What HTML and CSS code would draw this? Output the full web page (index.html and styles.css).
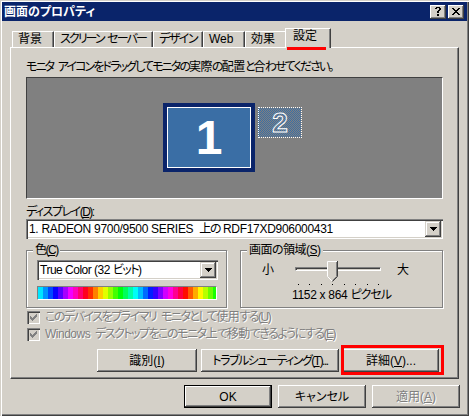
FILE: index.html
```html
<!DOCTYPE html>
<html lang="ja">
<head>
<meta charset="utf-8">
<title>画面のプロパティ</title>
<link rel="stylesheet" href="styles.css">
</head>
<body>
<div class="window">
  <div class="titlebar">
    <span class="title">画面のプロパティ</span>
    <div class="tb-btns">
      <span class="tb-btn"><svg width="6" height="9" viewBox="0 0 6 9" shape-rendering="crispEdges"><path fill="#000" d="M1 0h4v1h-4z M0 1h2v1h-2z M4 1h2v1h-2z M4 2h2v1h-2z M3 3h2v1h-2z M2 4h2v1h-2z M2 5h2v1h-2z M2 7h2v1h-2z M2 8h2v1h-2z"/></svg></span>
      <span class="tb-btn"><svg width="8" height="7" viewBox="0 0 8 7" shape-rendering="crispEdges"><path fill="#000" d="M0 0h2v1h-2z M6 0h2v1h-2z M1 1h2v1h-2z M5 1h2v1h-2z M2 2h4v1h-4z M3 3h2v1h-2z M2 4h4v1h-4z M1 5h2v1h-2z M5 5h2v1h-2z M0 6h2v1h-2z M6 6h2v1h-2z"/></svg></span>
    </div>
  </div>

  <div class="tabs">
    <div class="tab t-bg">背景</div>
    <div class="tab t-ss">スクリーン セーバー</div>
    <div class="tab t-ds">デザイン</div>
    <div class="tab t-web">Web</div>
    <div class="tab t-fx">効果</div>
    <div class="tab active">設定<span class="mark-tab"></span></div>
  </div>

  <div class="panel">
    <p class="hint">モニタ アイコンをドラッグしてモニタの<span class="k">実際</span>の<span class="k">配置</span>と<span class="k">合</span>わせてください。</p>
    <div class="monitors">
      <div class="mon mon1">1</div>
      <div class="mon mon2">2</div>
    </div>

    <div class="label">ディスプレイ(<u>D</u>):</div>
    <div class="combo combo-display">
      <span class="combo-text">1. RADEON 9700/9500 SERIES&nbsp; <span class="ja">上の</span> RDF17XD906000431</span>
      <span class="combo-btn"><svg width="7" height="4" viewBox="0 0 7 4" shape-rendering="crispEdges"><path fill="#000" d="M0 0h7v1h-7z M1 1h5v1h-5z M2 2h3v1h-3z M3 3h1v1h-1z"/></svg></span>
    </div>

    <div class="groups">
      <div class="group group-color">
        <span class="legend">色(<u>C</u>)</span>
        <div class="combo combo-color">
          <span class="combo-text">True Color (32 <span class="ja">ビット</span>)</span>
          <span class="combo-btn"><svg width="7" height="4" viewBox="0 0 7 4" shape-rendering="crispEdges"><path fill="#000" d="M0 0h7v1h-7z M1 1h5v1h-5z M2 2h3v1h-3z M3 3h1v1h-1z"/></svg></span>
        </div>
        <div class="rainbow"></div>
      </div>
      <div class="group group-area">
        <span class="legend legend-area">画面の領域(<u>S</u>)</span>
        <div class="slider-row">
          <span class="small">小</span>
          <div class="slider">
            <div class="track"></div>
            <svg class="thumb" width="11" height="21" viewBox="0 0 11 21">
              <path d="M0.5 0.5H10.5V15.5L5.5 20.5L0.5 15.5Z" fill="#d4d0c8"/>
              <path d="M0.5 15.5V0.5H10" fill="none" stroke="#fff"/>
              <path d="M0.5 15.5L5 20" fill="none" stroke="#fff"/>
              <path d="M10.5 0V15.5L5.5 20.5" fill="none" stroke="#404040"/>
              <path d="M9.5 1V15.5L5.5 19.5" fill="none" stroke="#808080"/>
            </svg>
          </div>
          <span class="large">大</span>
        </div>
        <div class="ticks"><i></i><i></i><i></i><i></i><i></i><i></i><i></i><i></i></div>
        <div class="res">1152 x 864 <span class="ja">ピクセル</span></div>
      </div>
    </div>

    <div class="check">
      <span class="cbox"><svg width="7" height="7" viewBox="0 0 7 7" shape-rendering="crispEdges"><path fill="#808080" d="M6 0h1v1h-1z M5 1h2v1h-2z M0 2h1v1h-1z M4 2h3v1h-3z M0 3h2v1h-2z M3 3h3v1h-3z M0 4h5v1h-5z M1 5h3v1h-3z M2 6h1v1h-1z"/></svg></span>
      <span class="dis">このデバイスをプライマリ モニタとして<span class="k">使用</span>する(<u>U</u>)</span>
    </div>
    <div class="check check2">
      <span class="cbox"><svg width="7" height="7" viewBox="0 0 7 7" shape-rendering="crispEdges"><path fill="#808080" d="M6 0h1v1h-1z M5 1h2v1h-2z M0 2h1v1h-1z M4 2h3v1h-3z M0 3h2v1h-2z M3 3h3v1h-3z M0 4h5v1h-5z M1 5h3v1h-3z M2 6h1v1h-1z"/></svg></span>
      <span class="dis"><span class="lat">Windows</span> デスクトップをこのモニタ<span class="k">上</span>で<span class="k">移動</span>できるようにする(<u>E</u>)</span>
    </div>

    <div class="panel-btns">
      <button class="btn b-id">識別(<u>I</u>)</button>
      <button class="btn b-tr">トラブルシューティング(<u>T</u>)...</button>
      <div class="mark-wrap">
        <button class="btn b-adv">詳細(<u>V</u>)...</button>
        <span class="mark-box"></span>
      </div>
    </div>
  </div>

  <div class="dialog-btns">
    <button class="btn dbtn default">OK</button>
    <button class="btn dbtn">キャンセル</button>
    <button class="btn dbtn"><span class="dis">適用(<u>A</u>)</span></button>
  </div>
</div>
</body>
</html>
```

FILE: styles.css
```css
* { box-sizing: border-box; }
html, body { margin: 0; padding: 0; }
body {
  width: 469px;
  height: 416px;
  overflow: hidden;
  background: #d4d0c8;
  font-family: "Liberation Sans", "Noto Sans CJK JP", sans-serif;
  font-size: 12px;
  font-feature-settings: "palt";
  letter-spacing: -1.5px;
  color: #000;
}
u { text-decoration: underline; text-underline-offset: 1px; }
.k { letter-spacing: -0.5px; }
.lat { letter-spacing: -0.5px; }

.window {
  width: 469px;
  height: 416px;
  padding: 2px;
  display: flex;
  flex-direction: column;
  background: #d4d0c8;
  box-shadow: inset 1px 1px 0 #d4d0c8, inset 2px 2px 0 #fff,
              inset -1px -1px 0 #404040, inset -2px -2px 0 #808080;
}

/* title bar */
.titlebar {
  height: 19px;
  background: #0a246a;
  display: flex;
  align-items: center;
  justify-content: space-between;
  padding: 0 3px 0 2px;
}
.title { color: #fff; font-weight: bold; line-height: 14px; white-space: nowrap; letter-spacing: 0; }
.tb-btns { display: flex; gap: 2px; }
.tb-btn {
  width: 16px;
  height: 14px;
  background: #d4d0c8;
  display: flex;
  align-items: center;
  justify-content: center;
  box-shadow: inset -1px -1px 0 #404040, inset 1px 1px 0 #fff, inset -2px -2px 0 #808080;
}

/* tabs */
.tabs {
  display: flex;
  align-items: flex-end;
  height: 20px;
  margin: 7px 0 0 8px;
  padding-left: 2px;
  position: relative;
  z-index: 1;
}
.tab {
  height: 16px;
  margin-bottom: 1px;
  padding-left: 5px;
  line-height: 14px;
  white-space: nowrap;
  word-spacing: 2px;
  overflow: hidden;
  background: #d4d0c8;
  border-top: 1px solid #fff;
  border-left: 1px solid #fff;
  border-right: 1px solid #404040;
  box-shadow: inset -1px 0 0 #808080;
}
.t-bg { width: 42px; letter-spacing: 0; }
.t-ss { width: 99px; letter-spacing: -1.9px; }
.t-ds { width: 50px; }
.t-web { width: 42px; letter-spacing: 0; }
.t-fx { width: 42px; letter-spacing: 0; }
.tab.active {
  width: 46px;
  height: 20px;
  margin: 0 -2px;
  padding-left: 7px;
  line-height: 14px;
  letter-spacing: 0;
  overflow: visible;
  position: relative;
  z-index: 2;
}
.mark-tab {
  position: absolute;
  left: 1px;
  top: 18px;
  width: 39px;
  height: 3px;
  background: #ff0000;
}

/* panel */
.panel {
  margin: -1px 8px 0 8px;
  height: 332px;
  padding: 12px 15px 0 15px;
  display: flex;
  flex-direction: column;
  border-top: 1px solid #fff;
  border-left: 1px solid #fff;
  border-right: 1px solid #404040;
  border-bottom: 1px solid #404040;
  box-shadow: inset -1px -1px 0 #808080;
}
.hint { margin: 0; line-height: 14px; white-space: nowrap; letter-spacing: -1.9px; word-spacing: 3px; }

.monitors {
  margin-top: 3px;
  height: 122px;
  position: relative;
  background: #808080;
  border-top: 1px solid #404040;
  border-left: 1px solid #404040;
  border-right: 1px solid #fff;
  border-bottom: 1px solid #fff;
}
.mon {
  position: absolute;
  display: flex;
  align-items: center;
  justify-content: center;
  font-family: "Liberation Sans", sans-serif;
  font-weight: bold;
  letter-spacing: 0;
  color: #fff;
}
.mon1 {
  left: 136px;
  top: 25px;
  width: 92px;
  height: 69px;
  background: #3a6ea5;
  border: 4px solid #0a246a;
  box-shadow: inset 0 0 0 1px #fff;
  font-size: 48px;
  line-height: 48px;
}
.mon2 {
  left: 231px;
  top: 29px;
  width: 44px;
  height: 31px;
  border: 1px dotted #fff;
  background-color: #808080;
  background-image: conic-gradient(#3a6ea5 25%, #808080 0 50%, #3a6ea5 0 75%, #808080 0);
  background-size: 2px 2px;
  font-size: 28px;
  line-height: 28px;
  color: transparent;
  -webkit-text-stroke: 1px #fff;
}

.label { margin-top: 6px; line-height: 14px; }

.combo {
  display: flex;
  height: 20px;
  padding: 2px;
  background: #fff;
  box-shadow: inset 1px 1px 0 #808080, inset 2px 2px 0 #404040,
              inset -1px -1px 0 #fff, inset -2px -2px 0 #d4d0c8;
}
.combo-text { flex: 1; padding-left: 1px; line-height: 16px; white-space: nowrap; overflow: hidden; letter-spacing: -0.3px; }
.combo-color .combo-text { letter-spacing: -0.5px; }
.ja { letter-spacing: -1.5px; }
.combo-btn {
  width: 16px;
  height: 16px;
  background: #d4d0c8;
  display: flex;
  align-items: center;
  justify-content: center;
  box-shadow: inset -1px -1px 0 #404040, inset 1px 1px 0 #d4d0c8,
              inset -2px -2px 0 #808080, inset 2px 2px 0 #fff;
}

/* group boxes */
.groups { display: flex; gap: 13px; margin-top: 11px; }
.group {
  height: 58px;
  display: flex;
  flex-direction: column;
  border: 1px solid #808080;
  box-shadow: inset 1px 1px 0 #fff, 1px 1px 0 #fff;
}
.group-color { width: 201px; }
.group-area { width: 203px; }
.legend {
  align-self: flex-start;
  margin: -8px 0 0 6px;
  padding: 0 2px;
  line-height: 14px;
  background: #d4d0c8;
  white-space: nowrap;
}
.legend-area { letter-spacing: -0.5px; }
.combo-color { width: 181px; margin: 3px 0 0 10px; }
.rainbow {
  width: 180px;
  height: 14px;
  margin: 6px 0 0 10px;
  border-top: 1px solid #808080;
  border-left: 1px solid #808080;
  border-right: 1px solid #fff;
  border-bottom: 1px solid #fff;
  background: linear-gradient(to right,
    hsl(186,100%,50%) 0 5px, hsl(205,100%,50%) 0 10px, hsl(223,100%,50%) 0 15px,
    hsl(242,100%,50%) 0 20px, hsl(260,100%,50%) 0 25px, hsl(279,100%,50%) 0 30px,
    hsl(297,100%,50%) 0 35px, hsl(316,100%,50%) 0 40px, hsl(334,100%,50%) 0 45px,
    hsl(353,100%,50%) 0 50px, hsl(11,100%,50%) 0 55px, hsl(30,100%,50%) 0 60px,
    hsl(48,100%,50%) 0 65px, hsl(67,100%,50%) 0 70px, hsl(85,100%,50%) 0 75px,
    hsl(104,100%,50%) 0 80px, hsl(122,100%,50%) 0 85px, hsl(141,100%,50%) 0 90px,
    hsl(159,100%,50%) 0 95px, hsl(178,100%,50%) 0 100px, hsl(196,100%,50%) 0 105px,
    hsl(215,100%,50%) 0 110px, hsl(233,100%,50%) 0 115px, hsl(252,100%,50%) 0 120px,
    hsl(270,100%,50%) 0 125px, hsl(289,100%,50%) 0 130px, hsl(307,100%,50%) 0 135px,
    hsl(326,100%,50%) 0 140px, hsl(344,100%,50%) 0 145px, hsl(3,100%,50%) 0 150px,
    hsl(21,100%,50%) 0 155px, hsl(40,100%,50%) 0 160px, hsl(58,100%,50%) 0 165px,
    hsl(77,100%,50%) 0 170px, hsl(95,100%,50%) 0 175px, hsl(114,100%,50%) 0 180px);
}

.slider-row { display: flex; align-items: flex-start; margin-top: 4px; height: 21px; }
.small { margin: 2px 0 0 21px; line-height: 14px; width: 12px; letter-spacing: 0; }
.slider { position: relative; width: 86px; height: 21px; margin-left: 21px; }
.track {
  margin-top: 6px;
  height: 4px;
  border-top: 1px solid #808080;
  border-left: 1px solid #808080;
  border-right: 1px solid #fff;
  border-bottom: 1px solid #fff;
  box-shadow: inset 1px 1px 0 #404040;
}
.thumb { position: absolute; left: 32px; top: 0; display: block; }
.large { margin: 2px 0 0 16px; line-height: 14px; letter-spacing: 0; }
.ticks {
  display: flex;
  justify-content: space-between;
  width: 81px;
  height: 1px;
  margin: 2px 0 0 57px;
}
.ticks i { display: block; width: 1px; height: 1px; background: #000; }
.res { margin-top: 3px; line-height: 14px; text-align: center; white-space: nowrap; letter-spacing: -0.3px; }
.res .ja { letter-spacing: -1px; }

/* checkboxes */
.check { display: flex; align-items: flex-start; margin: 2px 0 0 1px; line-height: 14px; white-space: nowrap; word-spacing: 3px; }
.check2 { margin-top: 3px; }
.cbox {
  width: 13px;
  height: 13px;
  margin: 1px 5px 0 0;
  flex: none;
  display: flex;
  align-items: center;
  justify-content: center;
  background: #d4d0c8;
  box-shadow: inset 1px 1px 0 #808080, inset 2px 2px 0 #404040,
              inset -1px -1px 0 #fff, inset -2px -2px 0 #d4d0c8;
}
.dis { color: #808080; text-shadow: 1px 1px 0 #fff; }

/* buttons */
.btn {
  height: 23px;
  padding: 0;
  border: none;
  margin: 0;
  font: inherit;
  letter-spacing: inherit;
  color: #000;
  background: #d4d0c8;
  line-height: 14px;
  white-space: nowrap;
  box-shadow: inset -1px -1px 0 #404040, inset 1px 1px 0 #fff, inset -2px -2px 0 #808080;
}
.panel-btns {
  display: flex;
  justify-content: flex-end;
  gap: 4px;
  margin-top: 8px;
  padding-right: 4px;
}
.b-id { width: 100px; letter-spacing: 0; }
.b-tr { width: 138px; }
.b-adv { width: 96px; display: block; letter-spacing: 0; }
.mark-wrap { position: relative; }
.mark-box {
  position: absolute;
  left: -2px;
  top: -4px;
  width: 103px;
  height: 30px;
  border: 3px solid #ff0000;
}

.dialog-btns {
  display: flex;
  justify-content: flex-end;
  gap: 6px;
  margin: 6px 7px 0 0;
}
.dbtn { width: 88px; letter-spacing: 0; }
.dbtn.default {
  border: 1px solid #000;
  box-shadow: inset -1px -1px 0 #404040, inset 1px 1px 0 #fff, inset -2px -2px 0 #808080;
}
```
